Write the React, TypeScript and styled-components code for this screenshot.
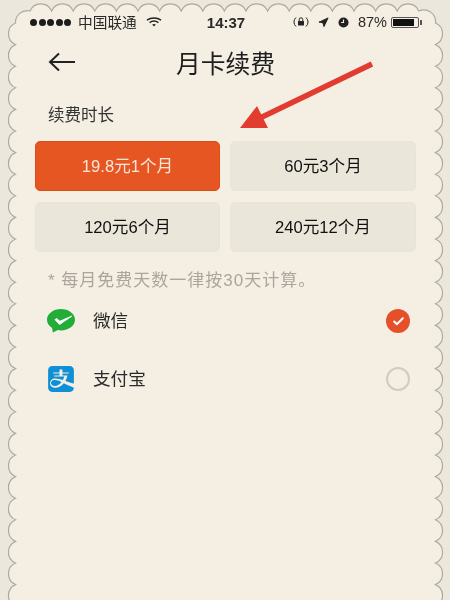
import { Check, Navigation } from "lucide-react";
import { SiAlipay } from "react-icons/si";
import styled, { createGlobalStyle } from "styled-components";

const GlobalStyle = createGlobalStyle`
  html, body {
    margin: 0;
    padding: 0;
    background: #ebe7dc;
  }
`;

const PERIOD = 21.6;

// scalloped edge of the paper, built once from the cusp spacing
const framePath = () => {
  const left = 15.5;
  const right = 435.5;
  const top = 11;
  const r = PERIOD / 2 + 1;
  let d = `M ${left} ${top + 12}`;
  d += ` A ${r} ${r} 0 0 1 30 ${top}`;
  for (let x = 30; x + PERIOD < right - 8; x += PERIOD) {
    d += ` A ${r} ${r} 0 0 1 ${(x + PERIOD).toFixed(1)} ${top}`;
  }
  d += ` A ${r} ${r} 0 0 1 ${right} ${top + 12}`;
  for (let y = top + 12; y < 610; y += PERIOD) {
    d += ` A ${r} ${r} 0 0 1 ${right} ${(y + PERIOD).toFixed(1)}`;
  }
  d += ` L ${left} 620`;
  const ys: number[] = [];
  for (let y = top + 12; y < 620; y += PERIOD) ys.push(y);
  ys.reverse().forEach((y) => {
    d += ` A ${r} ${r} 0 0 1 ${left} ${y.toFixed(1)}`;
  });
  return d + " Z";
};

const plans = [
  { label: "19.8元1个月", active: true },
  { label: "60元3个月", active: false },
  { label: "120元6个月", active: false },
  { label: "240元12个月", active: false },
];

const App = () => {
  return (
    <Page>
      <GlobalStyle />
      <Frame viewBox="0 0 450 600">
        <path d={framePath()} fill="#f4eee3" stroke="#aea99c" strokeWidth="1.2" />
      </Frame>

      <Content>
        <StatusBar>
          <Carrier>
            <Dots>
              {[0, 1, 2, 3, 4].map((i) => (
                <Dot key={i} />
              ))}
            </Dots>
            <CarrierName>中国联通</CarrierName>
            <svg width="16" height="10" viewBox="0 0 16 10">
              <path d="M1 3.2C5 .2 11 .2 15 3.2" fill="none" stroke="#222" strokeWidth="1.5" />
              <path d="M3.6 5.6C6.2 3.8 9.8 3.8 12.4 5.6" fill="none" stroke="#222" strokeWidth="1.5" />
              <path d="M6.2 7.6 8 9.6l1.8-2C8.8 6.8 7.2 6.8 6.2 7.6Z" fill="#222" />
            </svg>
          </Carrier>
          <Clock>14:37</Clock>
          <StatusRight>
            <svg width="16" height="14" viewBox="0 0 16 14">
              <path d="M3 11.5A6 6 0 0 1 3 2.5M13 2.5A6 6 0 0 1 13 11.5" fill="none" stroke="#222" strokeWidth="1" />
              <rect x="5" y="6" width="6" height="4.5" rx=".5" fill="#222" />
              <path d="M6.2 6V4.6a1.8 1.8 0 0 1 3.6 0V6" fill="none" stroke="#222" strokeWidth="1" />
            </svg>
            <Navigation size={11} fill="#222" stroke="#222" />
            <svg width="11" height="11" viewBox="0 0 12 12">
              <circle cx="6" cy="6" r="5.5" fill="#222" />
              <path d="M6 2.6V6H3.4" fill="none" stroke="#f4eee3" strokeWidth="1.2" />
            </svg>
            <span>87%</span>
            <Battery>
              <BatteryLevel />
            </Battery>
          </StatusRight>
        </StatusBar>

        <Header>
          <BackButton>
            <svg width="28" height="20" viewBox="0 0 28 20">
              <path d="M27 10H2M11 1.5 2 10l9 8.5" fill="none" stroke="#222" strokeWidth="2" />
            </svg>
          </BackButton>
          <Title>月卡续费</Title>
        </Header>

        <SectionLabel>续费时长</SectionLabel>
        <PlanGrid>
          {plans.map((plan) => (
            <Plan key={plan.label} $active={plan.active}>
              {plan.label}
            </Plan>
          ))}
        </PlanGrid>

        <Note>* 每月免费天数一律按30天计算。</Note>

        <PayRow>
          <svg width="28" height="24" viewBox="0 0 28 24">
            <path
              d="M14 0C6.3 0 0 4.8 0 10.7c0 3.3 2 6.3 5.1 8.2L5.8 23.6l5.2-2.5c1 .2 2 .3 3 .3 7.7 0 14-4.8 14-10.7S21.7 0 14 0Z"
              fill="#22ac38"
            />
            <path d="M8 10.6 12.6 15.4 24.6 7.2 12.9 12.3 9.6 9.6Z" fill="#fff" stroke="#fff" strokeWidth="1" strokeLinejoin="round" />
          </svg>
          <PayName>微信</PayName>
          <Radio $checked>
            <Check size={13} color="#fff" strokeWidth={3.6} />
          </Radio>
        </PayRow>
        <PayRow>
          <AlipayIcon>
            <SiAlipay size={26} color="#0e8fd6" />
          </AlipayIcon>
          <PayName>支付宝</PayName>
          <Radio $checked={false} />
        </PayRow>
      </Content>

      <Arrow viewBox="0 0 140 70">
        <path d="M132 4 20 58" stroke="#e23c31" strokeWidth="5.5" fill="none" />
        <path d="M0 68 17 46 28 68Z" fill="#e23c31" />
      </Arrow>
    </Page>
  );
};

export default App;

const Page = styled.div`
  position: relative;
  width: 450px;
  height: 600px;
  overflow: hidden;
  background: #ebe7dc;
  font-family: "Liberation Sans", "Noto Sans CJK SC", sans-serif;
  color: #222;
`;

const Frame = styled.svg`
  position: absolute;
  inset: 0;
  width: 450px;
  height: 600px;
`;

const Content = styled.div`
  position: relative;
  display: flex;
  flex-direction: column;
  padding: 12px 34px 0 35px;
  filter: blur(0.3px);
`;

const StatusBar = styled.div`
  display: grid;
  grid-template-columns: 1fr auto 1fr;
  align-items: center;
  height: 20px;
  margin-left: -5px;
  margin-right: -6px;
  font-size: 14.7px;
  color: #2a2a2a;
`;

const Carrier = styled.div`
  display: flex;
  align-items: center;
  gap: 7px;
`;

const CarrierName = styled.span`
  margin-top: -2px;
  margin-right: 2px;
`;

const Dots = styled.div`
  display: flex;
  gap: 1.5px;
`;

const Dot = styled.span`
  width: 7px;
  height: 7px;
  border-radius: 50%;
  background: #1c1c1c;
`;

const Clock = styled.span`
  font-size: 15px;
  font-weight: 700;
`;

const StatusRight = styled.div`
  display: flex;
  align-items: center;
  justify-content: flex-end;
  gap: 9px;
  font-size: 14.5px;
`;

const Battery = styled.div`
  position: relative;
  width: 28px;
  height: 11px;
  margin: 0 3px 0 -5px;
  padding: 1px;
  box-sizing: border-box;
  border: 1px solid #555;
  border-radius: 2px;

  &::after {
    content: "";
    position: absolute;
    right: -4px;
    top: 2px;
    width: 2px;
    height: 5px;
    background: #555;
  }
`;

const BatteryLevel = styled.div`
  width: 87%;
  height: 100%;
  background: #111;
`;

const Header = styled.div`
  position: relative;
  display: flex;
  align-items: center;
  justify-content: center;
  height: 60px;
`;

const BackButton = styled.div`
  position: absolute;
  left: 13px;
  top: 20px;
  line-height: 0;
`;

const Title = styled.h1`
  margin: 0;
  font-size: 24.8px;
  font-weight: 400;
  color: #1e1e1e;
`;

const SectionLabel = styled.div`
  margin: 12px 0 0 13px;
  font-size: 16.5px;
  line-height: 22px;
  color: #333;
`;

const PlanGrid = styled.div`
  display: grid;
  grid-template-columns: 185px 186px;
  grid-auto-rows: 50px;
  gap: 11px 10px;
  margin-top: 15px;
`;

const Plan = styled.div<{ $active: boolean }>`
  display: flex;
  align-items: center;
  justify-content: center;
  box-sizing: border-box;
  padding-bottom: 2px;
  border-radius: 5px;
  font-size: 16.6px;
  background: ${(p) => (p.$active ? "#e65623" : "#ebe6da")};
  border: 1px solid ${(p) => (p.$active ? "#d94e1d" : "#e9e4d8")};
  color: ${(p) => (p.$active ? "#f8e6d8" : "#111")};
`;

const Note = styled.div`
  margin: 18px 0 0 13px;
  font-size: 17px;
  line-height: 22px;
  letter-spacing: 1px;
  color: #aaa69c;
`;

const PayRow = styled.div`
  display: flex;
  align-items: center;
  gap: 18px;
  height: 58px;
  margin: 0 6px 0 12px;
`;

const PayName = styled.span`
  flex: 1;
  margin-top: -3px;
  font-size: 17.6px;
  color: #2b2b2b;
`;

const AlipayIcon = styled.div`
  display: flex;
  width: 26px;
  height: 26px;
  margin: 0 1px;
  line-height: 0;
`;

const Radio = styled.div<{ $checked: boolean }>`
  display: flex;
  align-items: center;
  justify-content: center;
  box-sizing: border-box;
  width: 24px;
  height: 24px;
  border-radius: 50%;
  background: ${(p) => (p.$checked ? "#e5502a" : "transparent")};
  border: ${(p) => (p.$checked ? "none" : "2px solid #cfccc2")};
`;

const Arrow = styled.svg`
  position: absolute;
  left: 240px;
  top: 60px;
  width: 140px;
  height: 70px;
`;
